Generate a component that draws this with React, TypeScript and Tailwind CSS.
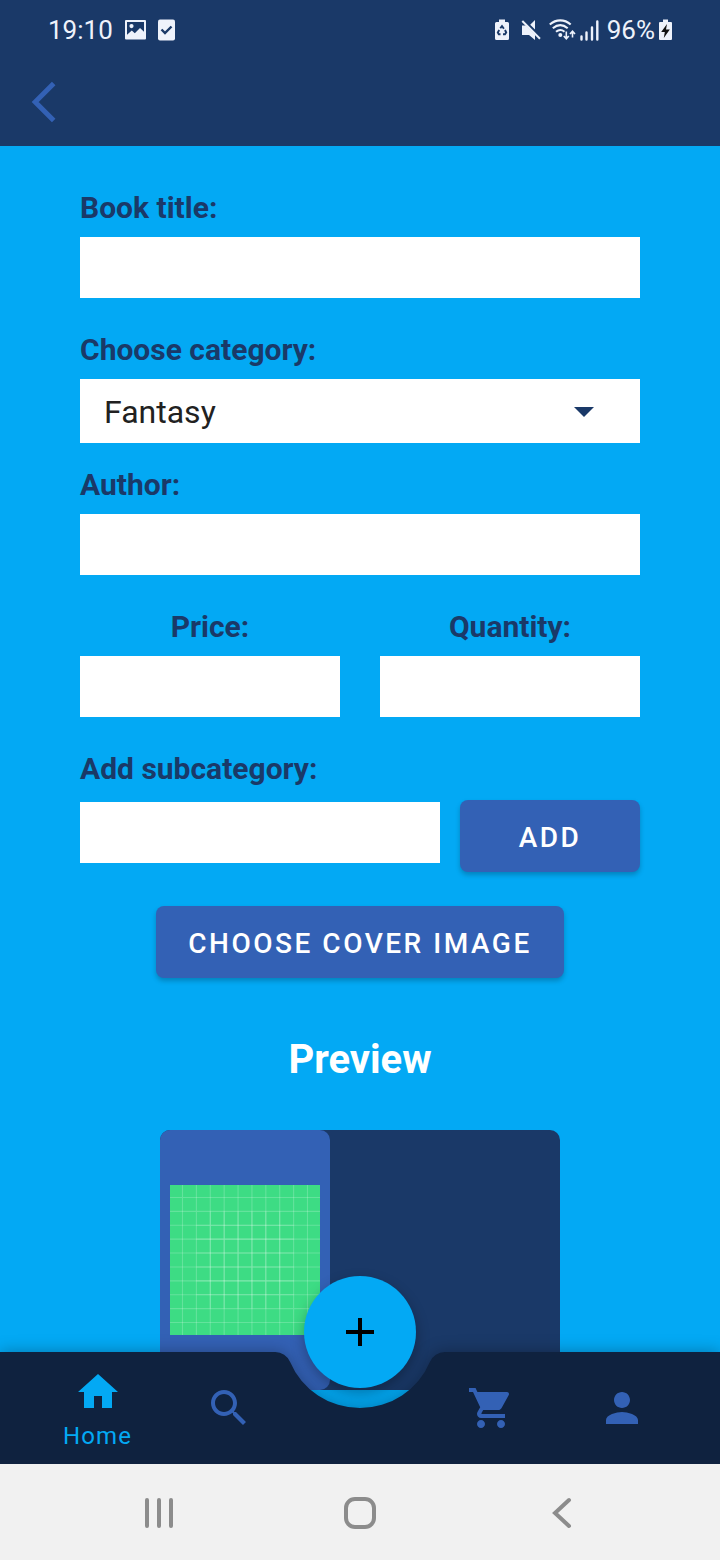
import type { ReactNode } from "react";

const gridLines = [9, 19, 29, 39, 49, 59, 69, 79, 89, 99];
const innerLines = [29, 39, 49, 59, 69, 79];

function StatusBar() {
  return (
    <div className="flex h-15 items-center justify-between pr-12 pl-12 text-[26px] leading-8 text-[#eef2fb]">
      <div className="flex items-center gap-3">
        <span>19:10</span>
        <svg className="h-[22px] w-[21px]" viewBox="0 0 21 22" aria-hidden="true">
          <path
            fill="currentColor"
            fillRule="evenodd"
            d="M1 1h19a1 1 0 0 1 1 1v17.500a1 1 0 0 1-1 1H1a1 1 0 0 1-1-1V2a1 1 0 0 1 1-1zM2 3v12.700l4.800-4.200 3 2.800 5.200-5.300 4 3.800V3zM6.500 5a2 2 0 1 1 0 4.200 2 2 0 0 1 0-4.200z"
          />
        </svg>
        <svg className="h-[22px] w-[17px]" viewBox="0 0 17 22" aria-hidden="true">
          <rect y="0.500" width="17" height="21" rx="2" fill="currentColor" />
          <path d="M3.500 10.500l3.500 3.500 6.500-6.500" fill="none" stroke="#1a3968" strokeWidth="2.400" />
        </svg>
      </div>
      <div className="flex items-center">
        <svg className="mr-3 h-[22px] w-[14px]" viewBox="0 0 14 22" aria-hidden="true">
          <path fill="currentColor" d="M4 0.500h6V3h2.500A1.500 1.500 0 0 1 14 4.500v15a1.500 1.500 0 0 1-1.500 1.500h-11A1.500 1.500 0 0 1 0 19.500v-15A1.500 1.500 0 0 1 1.500 3H4z" />
          <path
            d="M5.300 9.300L7 7l1.900 2.700M10 11l1.200 2.500-1.200 1.800H8M5.500 15.300H3.800l-1-1.800L4.200 11"
            fill="none"
            stroke="#1a3968"
            strokeWidth="1.900"
          />
        </svg>
        <svg className="mr-2 h-[22px] w-[20px]" viewBox="0 0 20 22" aria-hidden="true">
          <path fill="currentColor" d="M1 6.500h4l9 9V21l-6-5H1zM14 1v9.500L9.200 5.700z" />
          <path d="M1.300 2L19 19.700" stroke="currentColor" strokeWidth="2" />
        </svg>
        <svg className="mr-1 h-[22px] w-[27px]" viewBox="0 0 27 22" aria-hidden="true">
          <g fill="none" stroke="currentColor" strokeWidth="2.100">
            <path d="M0.800 5.500C7 0 15.500 0 21.700 5.500M3.800 9.300C8.500 5.300 14 5.300 18.700 9.300M7 12.800c2.800-2.300 5.800-2.300 8.500 0" />
          </g>
          <circle cx="11.300" cy="16" r="2" fill="currentColor" />
          <g fill="none" stroke="currentColor" strokeWidth="1.600">
            <path d="M17.300 12.500v7M14.800 17l2.500 2.700 2.500-2.700M23.500 18.500v-6M21 15l2.500-2.700L26 15" />
          </g>
        </svg>
        <svg className="mr-2 h-[22px] w-[19px]" viewBox="0 0 19 22" aria-hidden="true">
          <path
            d="M1.500 17.500v3M6.500 13.500v7M12 8.500v12M17.300 2.500v18"
            fill="none"
            stroke="currentColor"
            strokeWidth="2.400"
            strokeLinecap="round"
          />
        </svg>
        <span>96%</span>
        <svg className="ml-1 h-[22px] w-[13px]" viewBox="0 0 13 22" aria-hidden="true">
          <path fill="currentColor" d="M4 0.500h5V3h3a1 1 0 0 1 1 1v16a1 1 0 0 1-1 1H1a1 1 0 0 1-1-1V4a1 1 0 0 1 1-1h3z" />
          <path fill="#111" d="M8 5L2.200 13h3.600L4.800 19l6-8.500H7z" />
        </svg>
      </div>
    </div>
  );
}

function Field({ id, label, centered = false }: { id: string; label: string; centered?: boolean }) {
  return (
    <div className="flex min-w-0 flex-1 flex-col gap-3">
      <label htmlFor={id} className={centered ? "text-center leading-[34px]" : "leading-[34px]"}>
        {label}
      </label>
      <input id={id} type="text" className="h-[61px] w-full bg-white px-4 font-normal text-[#212121] outline-none" />
    </div>
  );
}

function NavItem({ name, path, active = false }: { name: string; path: string; active?: boolean }) {
  return (
    <a
      href={"#" + name.toLowerCase()}
      aria-label={name}
      className={
        active
          ? "flex flex-col items-center justify-center text-[#03a9f4]"
          : "flex flex-col items-center justify-center text-[#3361b5]"
      }
    >
      <svg className="size-12" viewBox="0 0 24 24" fill="currentColor" aria-hidden="true">
        <path d={path} />
      </svg>
      {active && <span className="mt-2 text-2xl leading-6 tracking-wider">{name}</span>}
    </a>
  );
}

function SystemButton({ label, children }: { label: string; children: ReactNode }) {
  return (
    <button type="button" aria-label={label} className="flex items-center justify-center text-[#8c8c8c]">
      <svg
        className="size-12"
        viewBox="0 0 48 48"
        fill="none"
        stroke="currentColor"
        strokeWidth="4"
        strokeLinecap="round"
        aria-hidden="true"
      >
        {children}
      </svg>
    </button>
  );
}

function CoverPlaceholder() {
  return (
    <svg className="aspect-square w-full" viewBox="0 0 108 108" role="img" aria-label="Cover">
      <rect width="108" height="108" fill="#3ddc84" />
      <g stroke="#ffffff" strokeOpacity="0.200" strokeWidth="0.800">
        {gridLines.map((n) => (
          <path key={n} d={`M${n} 0V108M0 ${n}H108`} />
        ))}
        {innerLines.map((n) => (
          <path key={n} d={`M${n} 19V89M19 ${n}H89`} />
        ))}
      </g>
    </svg>
  );
}

export default function App() {
  return (
    <div className="flex min-h-screen flex-col bg-[#03a9f4] font-['Roboto',sans-serif]">
      <header className="bg-[#1a3968]">
        <StatusBar />
        <div className="flex h-[86px] items-center px-5">
          <button type="button" aria-label="Back" className="text-[#3361b5]">
            <svg className="size-12" viewBox="0 0 48 48" fill="none" stroke="currentColor" strokeWidth="5" aria-hidden="true">
              <path d="M33.700 4.500L15.200 23 33.700 41.500" />
            </svg>
          </button>
        </div>
      </header>

      <main className="flex-1 px-20 pt-[45px] pb-16">
        <form className="flex flex-col text-[30px] font-bold text-[#1a3968]" onSubmit={(e) => e.preventDefault()}>
          <Field id="title" label="Book title:" />
          <div className="mt-[35px] flex flex-col gap-3">
            <label htmlFor="category" className="leading-[34px]">
              Choose category:
            </label>
            <div className="relative">
              <select
                id="category"
                className="h-16 w-full appearance-none bg-white pt-0.5 pr-16 pl-6 text-[32px] font-normal text-[#212121] outline-none"
              >
                <option>Fantasy</option>
              </select>
              <svg
                className="pointer-events-none absolute top-7 right-[46px] h-2.5 w-5"
                viewBox="0 0 20 10"
                fill="#1a3968"
                aria-hidden="true"
              >
                <path d="M0 0h20L10 10z" />
              </svg>
            </div>
          </div>
          <div className="mt-[25px] flex flex-col">
            <Field id="author" label="Author:" />
          </div>
          <div className="mt-[35px] flex gap-10">
            <Field id="price" label="Price:" centered />
            <Field id="quantity" label="Quantity:" centered />
          </div>
          <label htmlFor="subcategory" className="mt-[35px] leading-[34px]">
            Add subcategory:
          </label>
          <div className="mt-3.5 flex items-start gap-5">
            <input
              id="subcategory"
              type="text"
              className="mt-0.5 h-[61px] min-w-0 flex-1 bg-white px-4 font-normal text-[#212121] outline-none"
            />
            <button
              type="submit"
              className="h-18 w-[180px] rounded-lg bg-[#3361b5] pt-1 text-[28px] font-medium tracking-[0.09em] text-white shadow-[0_3px_5px_rgba(0,0,0,0.220)]"
            >
              ADD
            </button>
          </div>
          <button
            type="button"
            className="mt-[34px] h-18 self-center rounded-lg bg-[#3361b5] px-8 pt-1 text-[28px] font-medium tracking-[0.09em] text-white shadow-[0_3px_5px_rgba(0,0,0,0.220)]"
          >
            CHOOSE COVER IMAGE
          </button>
        </form>

        <h2 className="mt-[58px] text-center text-[40px] leading-12 font-bold text-white">Preview</h2>
        <div className="mx-auto mt-[46px] flex h-[260px] w-full max-w-[400px] rounded-[10px] bg-[#1a3968]">
          <div className="flex w-[170px] items-center rounded-[10px] bg-[#3361b5] px-2.5">
            <CoverPlaceholder />
          </div>
        </div>
      </main>

      <footer className="sticky bottom-0 -mt-28">
        <nav className="relative h-28">
          <div className="absolute inset-0 flex drop-shadow-[0_0_8px_rgba(0,0,0,0.300)]" aria-hidden="true">
            <div className="flex-1 bg-[#0f223f]" />
            <svg className="h-28 w-[200px]" viewBox="0 0 200 112" fill="#0f223f">
              <path d="M0 0H15.300A16 16 0 0 1 30 9.700A76 76 0 0 0 170 9.700A16 16 0 0 1 184.700 0H200V112H0Z" />
            </svg>
            <div className="flex-1 bg-[#0f223f]" />
          </div>
          <div className="relative grid h-full grid-cols-5 px-8">
            <NavItem active name="Home" path="M10 20v-6h4v6h5v-8h3L12 3 2 12h3v8z" />
            <NavItem
              name="Search"
              path="M15.500 14h-.79l-.28-.27C15.410 12.590 16 11.110 16 9.500 16 5.910 13.090 3 9.500 3S3 5.910 3 9.500 5.910 16 9.500 16c1.610 0 3.090-.59 4.230-1.570l.27.28v.79l5 4.990L20.490 19l-4.990-5zm-6 0C7.010 14 5 11.990 5 9.500S7.010 5 9.500 5 14 7.010 14 9.500 11.990 14 9.500 14z"
            />
            <div className="relative">
              <button
                type="button"
                aria-label="Add book"
                className="absolute -top-19 left-1/2 flex size-28 -translate-x-1/2 items-center justify-center rounded-full bg-[#03a9f4] text-black shadow-[0_6px_14px_rgba(0,0,0,0.300)]"
              >
                <svg className="size-12" viewBox="0 0 24 24" fill="currentColor" aria-hidden="true">
                  <path d="M19 13h-6v6h-2v-6H5v-2h6V5h2v6h6v2z" />
                </svg>
              </button>
            </div>
            <NavItem
              name="Cart"
              path="M7 18c-1.100 0-1.990.9-1.990 2S5.900 22 7 22s2-.9 2-2-.9-2-2-2zM1 2v2h2l3.600 7.590-1.350 2.450c-.16.28-.25.61-.25.96 0 1.100.9 2 2 2h12v-2H7.420c-.14 0-.25-.11-.25-.25l.03-.12.9-1.630h7.450c.75 0 1.410-.41 1.750-1.030l3.580-6.490c.08-.14.12-.31.12-.48 0-.55-.45-1-1-1H5.210l-.94-2H1zm16 16c-1.100 0-1.990.9-1.990 2s.89 2 1.990 2 2-.9 2-2-.9-2-2-2z"
            />
            <NavItem
              name="Profile"
              path="M12 12c2.210 0 4-1.790 4-4s-1.790-4-4-4-4 1.790-4 4 1.790 4 4 4zm0 2c-2.670 0-8 1.340-8 4v2h16v-2c0-2.660-5.330-4-8-4z"
            />
          </div>
        </nav>
        <div className="relative grid h-24 grid-cols-3 bg-[#f1f1f1] px-[58px]">
          <SystemButton label="Recent apps">
            <path d="M12 12v26M24 12v26M36 12v26" />
          </SystemButton>
          <SystemButton label="Home screen">
            <rect x="10" y="11" width="28" height="28" rx="9" />
          </SystemButton>
          <SystemButton label="System back">
            <path d="M32 12L18 25l14 13" />
          </SystemButton>
        </div>
      </footer>
    </div>
  );
}
